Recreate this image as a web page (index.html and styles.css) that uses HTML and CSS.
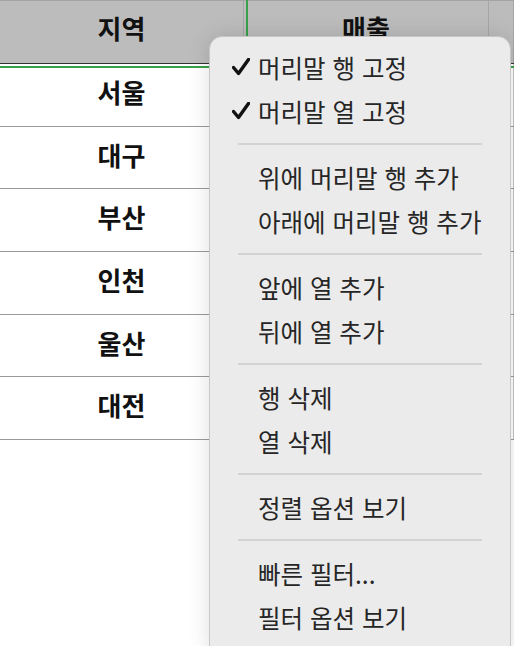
FILE: index.html
```html
<!DOCTYPE html>
<html lang="ko">
<head>
    <meta charset="UTF-8">
    <meta name="viewport" content="width=device-width, initial-scale=1.0">
    <title>시트</title>
    <link rel="stylesheet" href="styles.css">
</head>
<body>
    <div class="sheet">
        <div class="row header">
            <div class="cell">지역</div>
            <div class="cell">매출</div>
            <div class="cell"></div>
        </div>
        <div class="row"><div class="cell">서울</div><div class="cell"></div><div class="cell"></div></div>
        <div class="row"><div class="cell">대구</div><div class="cell"></div><div class="cell"></div></div>
        <div class="row"><div class="cell">부산</div><div class="cell"></div><div class="cell"></div></div>
        <div class="row"><div class="cell">인천</div><div class="cell"></div><div class="cell"></div></div>
        <div class="row"><div class="cell">울산</div><div class="cell"></div><div class="cell"></div></div>
        <div class="row"><div class="cell">대전</div><div class="cell"></div><div class="cell"></div></div>

        <div class="freeze-col"></div>
        <div class="freeze-row"></div>

        <div class="menu">
            <div class="item">
                <span class="check"><svg width="18" height="18" viewBox="0 0 18 18"><path d="M1.5 9.5 L6.5 15.5 L16.5 1.5" fill="none" stroke="#111" stroke-width="3.4" stroke-linecap="round" stroke-linejoin="round"/></svg></span>
                머리말 행 고정
            </div>
            <div class="item">
                <span class="check"><svg width="18" height="18" viewBox="0 0 18 18"><path d="M1.5 9.5 L6.5 15.5 L16.5 1.5" fill="none" stroke="#111" stroke-width="3.4" stroke-linecap="round" stroke-linejoin="round"/></svg></span>
                머리말 열 고정
            </div>
            <div class="sep"></div>
            <div class="item"><span class="check"></span>위에 머리말 행 추가</div>
            <div class="item"><span class="check"></span>아래에 머리말 행 추가</div>
            <div class="sep"></div>
            <div class="item"><span class="check"></span>앞에 열 추가</div>
            <div class="item"><span class="check"></span>뒤에 열 추가</div>
            <div class="sep"></div>
            <div class="item"><span class="check"></span>행 삭제</div>
            <div class="item"><span class="check"></span>열 삭제</div>
            <div class="sep"></div>
            <div class="item"><span class="check"></span>정렬 옵션 보기</div>
            <div class="sep"></div>
            <div class="item"><span class="check"></span>빠른 필터...</div>
            <div class="item"><span class="check"></span>필터 옵션 보기</div>
        </div>
    </div>
</body>
</html>
```

FILE: styles.css
```css
body {
    margin: 0;
    padding: 0;
    background-color: #fff;
    font-family: "Noto Sans CJK KR", "Noto Sans", sans-serif;
    overflow: hidden;
}

.sheet {
    position: relative;
    width: 514px;
    height: 646px;
    overflow: hidden;
}

.row {
    display: grid;
    grid-template-columns: 244px 245px 1fr;
    height: 62.7px;
    box-sizing: border-box;
    border-bottom: 1px solid #9a9a9a;
}

.cell {
    display: flex;
    align-items: center;
    justify-content: center;
    border-right: 1px solid #c4c4c4;
    font-size: 26px;
    font-weight: bold;
    color: #111;
    padding-bottom: 7px;
}

.header {
    height: 64px;
    background-color: #bcbcbc;
    border-top: 1px solid #a3a3a3;
    border-bottom: 1px solid #333;
}

.header .cell {
    border-right-color: #a6a6a6;
    font-size: 26px;
    padding-bottom: 10px;
}

.freeze-col {
    position: absolute;
    left: 246px;
    top: 0;
    width: 2px;
    height: 100%;
    background-color: #3aa04a;
}

.freeze-row {
    position: absolute;
    left: 0;
    top: 66px;
    width: 100%;
    height: 2px;
    background-color: #3aa04a;
}

.menu {
    position: absolute;
    left: 209px;
    top: 36px;
    width: 300px;
    padding: 8px 0 20px;
    background-color: #ebebeb;
    border: 1px solid #c6c6c6;
    border-radius: 13px;
    box-shadow: 0 0 22px rgba(0, 0, 0, 0.13);
}

.item {
    display: flex;
    align-items: center;
    height: 44px;
    padding-left: 22px;
    font-size: 24.5px;
    color: #262626;
}

.check {
    display: flex;
    width: 26px;
}

.sep {
    height: 2px;
    margin: 10px 28px;
    background-color: #d3d3d3;
}
```
